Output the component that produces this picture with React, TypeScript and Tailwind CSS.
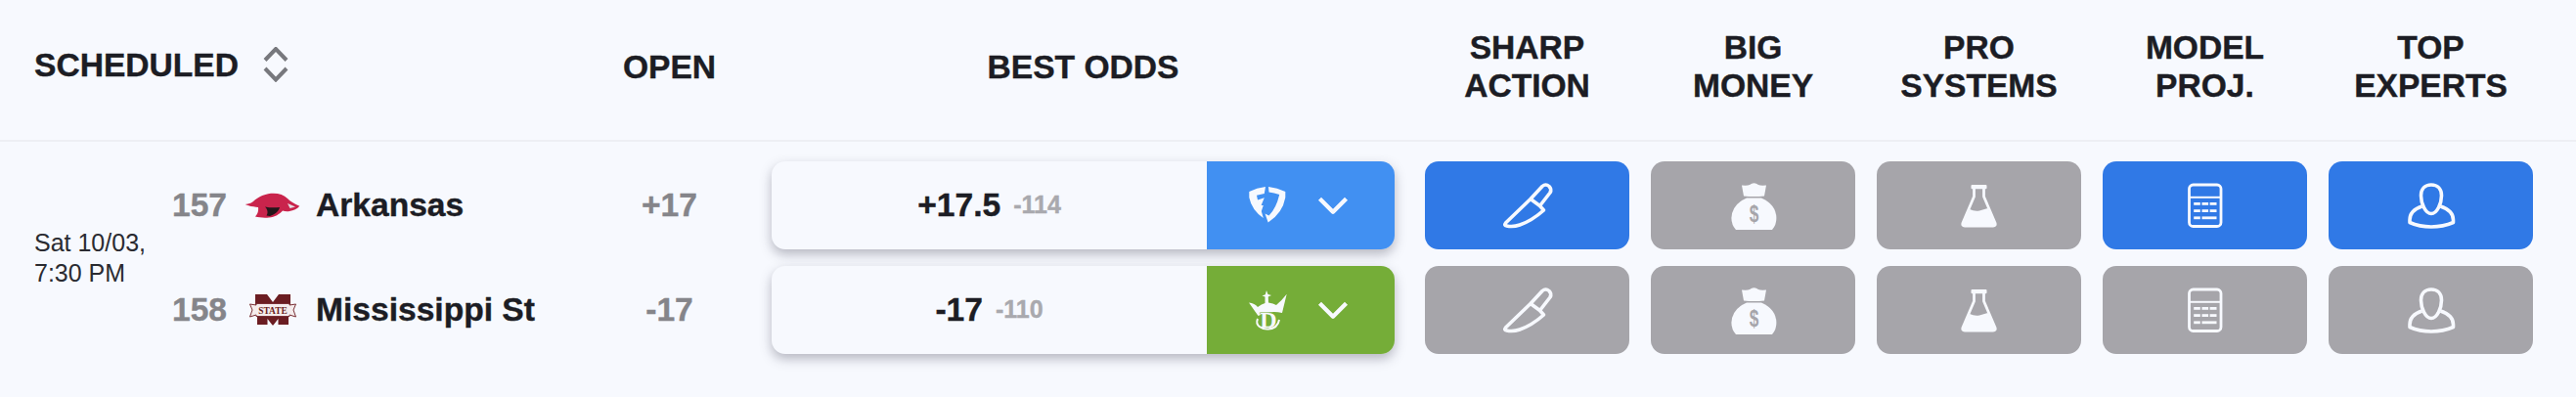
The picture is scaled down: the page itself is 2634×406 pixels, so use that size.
import { ChevronDown } from "lucide-react";
import React from "react";

const font = { fontFamily: '"Liberation Sans", Arial, sans-serif' };

const KnifeIcon = () => (
  <svg viewBox="0 0 60 60" className="w-[60px] h-[60px]" fill="none" stroke="#f7f9fe" strokeWidth="3.6" strokeLinejoin="round">
    <path d="M33 23.5 L7.5 48 Q5.5 50.5 8.5 51 Q15 52.5 22 50 Q34 46 46.5 35 L42.5 30.5 L53 17 Q55 13.5 52 10.5 Q48.5 7.5 45 10.5 L33 23.5 L42.5 30.5" />
  </svg>
);

const MoneyIcon = () => (
  <svg viewBox="0 0 60 60" className="w-[60px] h-[60px]">
    <path d="M18 9.5 Q24 10 26 9 Q30.5 5.5 35 9 Q37 10 43 9.5 L41 20.5 Q30.5 21.5 20 20.5 Z" fill="#f7f9fe" />
    <path d="M23 22.5 L38 22.5 Q53 29 53.4 43 Q53.4 50 49 55 L12 55 Q7.4 50 7.4 43 Q8 29 23 22.5 Z" fill="#f7f9fe" />
    <text transform="translate(30.5 46.5) scale(0.72 1)" textAnchor="middle" fontSize="24" fontWeight="700" fill="#a6a5aa" style={font}>$</text>
  </svg>
);

const FlaskIcon = () => (
  <svg viewBox="0 0 60 60" className="w-[60px] h-[60px]">
    <rect x="21.5" y="9" width="16" height="4.2" rx="1" fill="#f7f9fe" />
    <path d="M24.5 12 L24.5 21 L13 48 Q12 51 15 51 L44 51 Q47 51 46 48 L34.5 21 L34.5 12" fill="none" stroke="#f7f9fe" strokeWidth="2.8" />
    <path d="M20 34 Q25 36.5 30 35.5 L38.5 33 L47 49 Q47 51.5 44 51.5 L15 51.5 Q12 51.5 12.5 49 Z" fill="#f7f9fe" />
  </svg>
);

const CalculatorIcon = () => (
  <svg viewBox="0 0 60 60" className="w-[60px] h-[60px]" fill="#f7f9fe">
    <rect x="13.5" y="9" width="32.5" height="42.5" rx="4" fill="none" stroke="#f7f9fe" strokeWidth="2.8" />
    <rect x="13.5" y="20.8" width="32.5" height="2" />
    <rect x="18.2" y="27" width="6.6" height="2.8" />
    <rect x="26.5" y="27" width="6.6" height="2.8" />
    <rect x="34.6" y="27" width="6.9" height="2.8" />
    <rect x="18.2" y="34.2" width="6.6" height="2.8" />
    <rect x="26.5" y="34.2" width="6.6" height="2.8" />
    <rect x="34.6" y="34.2" width="6.9" height="2.8" />
    <rect x="18.2" y="41.4" width="6.6" height="2.8" />
    <rect x="26.5" y="41.4" width="15" height="2.8" />
  </svg>
);

const PersonIcon = () => (
  <svg viewBox="0 0 60 60" className="w-[60px] h-[60px]" fill="none" stroke="#f7f9fe" strokeWidth="3.6" strokeLinejoin="round">
    <path d="M30 9 C23.5 9 19.5 13.5 19.5 20 C19.5 28 24 38.5 30 38.5 C36 38.5 40.5 28 40.5 20 C40.5 13.5 36.5 9 30 9 Z" />
    <path d="M20.5 31 C13 33.5 8 38.5 8 45 L8 47.5 Q18 52 30 52 Q42 52 52.5 47.5 L52.5 45 C52.5 38.5 47 33.5 39.5 31" />
  </svg>
);

const FanDuelLogo = () => (
  <svg viewBox="0 0 42 42" className="w-[42px] h-[42px]" fill="#f7f9fe">
    <path d="M2.3 7 Q10 3 19 2 L17.8 9 L10 10.7 L11 15.5 L17.8 13.3 L14.6 21 L16.8 21 L14.8 27 L16.8 34 Q5 26 2.3 13 Z" />
    <path d="M22 2 Q31 3 39.3 7 L39.3 13 Q36.5 29 21.7 38.5 L18.5 29.5 L22.5 31.5 Q30 24 33.2 10 Q28 8 22.5 7.5 Z" />
  </svg>
);

const DraftKingsLogo = () => (
  <svg viewBox="0 0 42 42" className="w-[42px] h-[42px]" fill="#f7f9fe">
    <path d="M2 13.5 Q8 14 11 18 Q15 15 18.5 14 L18.5 7.5 L15.5 6.5 L18.8 5.2 L20 1 L21.5 5 L25 6 L21.8 7.5 L22 13.5 Q27 14 30 16 Q35 12 40.7 4.7 L36 24 Q24 21 11.5 27 Z" />
    <text x="22" y="38.5" textAnchor="middle" fontSize="24" fontWeight="700" fill="#f7f9fe" stroke="#75ad38" strokeWidth="1.2" paintOrder="stroke" style={{ fontFamily: '"Liberation Serif", serif' }}>D</text>
    <path d="M11 30 C8 37 15 41 22 40.5 C28 40 32 37 33 31" fill="none" stroke="#f7f9fe" strokeWidth="2" />
  </svg>
);

const HogLogo = () => (
  <svg viewBox="0 0 57 26" className="w-[57px] h-[26px]">
    <path d="M0.7 12 C4 11.5 7 11 9 9 C13 5 19 2 27 0.8 C34 0.2 40 2 44 6 C46.5 8.5 50 11 56.3 13.8 C54 16.5 50 18.5 46 19 C43 19.5 41 19 39 18.5 C36 22 31 25 25 25.5 C20 26 15 25.5 11 24.5 C13.5 22 14.5 18.5 14 15 C10 14.5 5 14 0.7 12 Z" fill="#c9244c" />
    <path d="M21 14.5 C26 15.5 31 15.5 36 15 C35 19 31 22.5 26 24 L22.5 23.5 C24.5 20.5 23.5 17 21 14.5 Z" fill="#24161a" />
    <path d="M44 11 L52 14.5 L46.5 16 Z" fill="#e4dfe3" />
  </svg>
);

const StateLogo = () => (
  <svg viewBox="0 0 48 32" className="w-[48px] h-[32px]">
    <path d="M6 0 L18 0 L24 8 L30 0 L42 0 L42 11 L6 11 Z" fill="#6b1d22" />
    <path d="M8 22 L40 22 L40 31 L29.5 31 L29.5 25 L24.5 31.5 L23.5 31.5 L18.5 25 L18.5 31 L8 31 Z" fill="#6b1d22" />
    <path d="M0.5 10 L7 11 L7 9.5 L41 9.5 L41 11 L47.5 10 L45 16 L47.5 23 L41 21 L41 22.5 L7 22.5 L7 21 L0.5 23 L3 16 Z" fill="#f5ecec" stroke="#7a3036" strokeWidth="1" />
    <text x="24" y="19.8" textAnchor="middle" fontSize="9.4" fontWeight="700" fill="#6b1d22" style={{ fontFamily: '"Liberation Serif", serif' }}>STATE</text>
  </svg>
);

const SortIcon = () => (
  <svg viewBox="0 0 26 36" className="w-[26px] h-[36px]" fill="none" stroke="#77787d" strokeWidth="4">
    <path d="M2 13.5 L13 2 L24 13.5" />
    <path d="M2 22 L13 33.5 L24 22" />
  </svg>
);

const columns = [
  { top: "SHARP", bottom: "ACTION", Icon: KnifeIcon, active: [true, false] },
  { top: "BIG", bottom: "MONEY", Icon: MoneyIcon, active: [false, false] },
  { top: "PRO", bottom: "SYSTEMS", Icon: FlaskIcon, active: [false, false] },
  { top: "MODEL", bottom: "PROJ.", Icon: CalculatorIcon, active: [true, false] },
  { top: "TOP", bottom: "EXPERTS", Icon: PersonIcon, active: [true, false] },
];

const games = [
  { rot: 157, team: "Arkansas", Logo: HogLogo, open: "+17", odds: "+17.5", price: "-114", book: "bg-[#4190f2]", BookLogo: FanDuelLogo },
  { rot: 158, team: "Mississippi St", Logo: StateLogo, open: "-17", odds: "-17", price: "-110", book: "bg-[#75ad38]", BookLogo: DraftKingsLogo },
];

export default function App() {
  return (
    <div className="w-[2634px] h-[406px] bg-[#f7f9fe] text-[#1c1d24] overflow-hidden" style={font}>
      {/* header */}
      <div className="flex items-center h-[145px] pb-[7px] border-b-2 border-[#eeeff4] text-[33.6px] leading-[39px] font-bold [-webkit-text-stroke:0.4px_currentColor]">
        <div className="w-[600px] pl-[35px] flex items-center gap-[25px] -mt-[4px]">
          <span>SCHEDULED</span>
          <SortIcon />
        </div>
        <div className="w-[169px] text-center">OPEN</div>
        <div className="w-[637px] ml-[20px] text-center">BEST ODDS</div>
        <div className="flex ml-[31px] gap-[22px]">
          {columns.map((c) => (
            <div key={c.top} className="w-[209px] text-center">
              {c.top}
              <br />
              {c.bottom}
            </div>
          ))}
        </div>
      </div>

      {/* game */}
      <div className="flex pt-[20px]">
        <div className="w-[176px] pl-[35px] flex items-center text-[25px] leading-[31px] text-[#2a2b31]">
          <div>
            Sat 10/03,
            <br />
            7:30 PM
          </div>
        </div>

        <div className="flex flex-col gap-[17px]">
          {games.map((g) => (
            <div key={g.rot} className="flex items-center h-[90px] text-[33.6px] font-bold [-webkit-text-stroke:0.4px_currentColor]">
              <div className="w-[424px] flex items-center">
                <span className="w-[74px] text-[#85858a]">{g.rot}</span>
                <span className="w-[57px] flex justify-center">
                  <g.Logo />
                </span>
                <span className="ml-[16px]">{g.team}</span>
              </div>
              <div className="w-[169px] text-center text-[#85858a]">{g.open}</div>
            </div>
          ))}
        </div>

        <div className="flex flex-col gap-[17px] ml-[20px]">
          {games.map((g) => (
            <div key={g.rot} className="flex w-[637px] h-[90px] rounded-[14px] overflow-hidden bg-[#f7f9fe] shadow-[0_5px_12px_rgba(60,60,80,0.35)]">
              <div className="flex-1 flex items-center justify-center gap-[13px] font-bold [-webkit-text-stroke:0.4px_currentColor]">
                <span className="text-[33.6px]">{g.odds}</span>
                <span className="text-[25px] text-[#a9a9ae]">{g.price}</span>
              </div>
              <div className={`w-[192px] flex items-center pl-[41px] ${g.book}`}>
                <g.BookLogo />
                <ChevronDown className="ml-[19px] w-[54px] h-[54px] text-[#f7f9fe]" strokeWidth={1.9} strokeLinecap="butt" />
              </div>
            </div>
          ))}
        </div>

        <div className="flex ml-[31px] gap-[22px]">
          {columns.map((c) => (
            <div key={c.top} className="flex flex-col gap-[17px]">
              {c.active.map((on, i) => (
                <div
                  key={i}
                  className={`w-[209px] h-[90px] rounded-[14px] flex items-center justify-center ${on ? "bg-[#3079e6]" : "bg-[#a6a5aa]"}`}
                >
                  <c.Icon />
                </div>
              ))}
            </div>
          ))}
        </div>
      </div>
    </div>
  );
}
